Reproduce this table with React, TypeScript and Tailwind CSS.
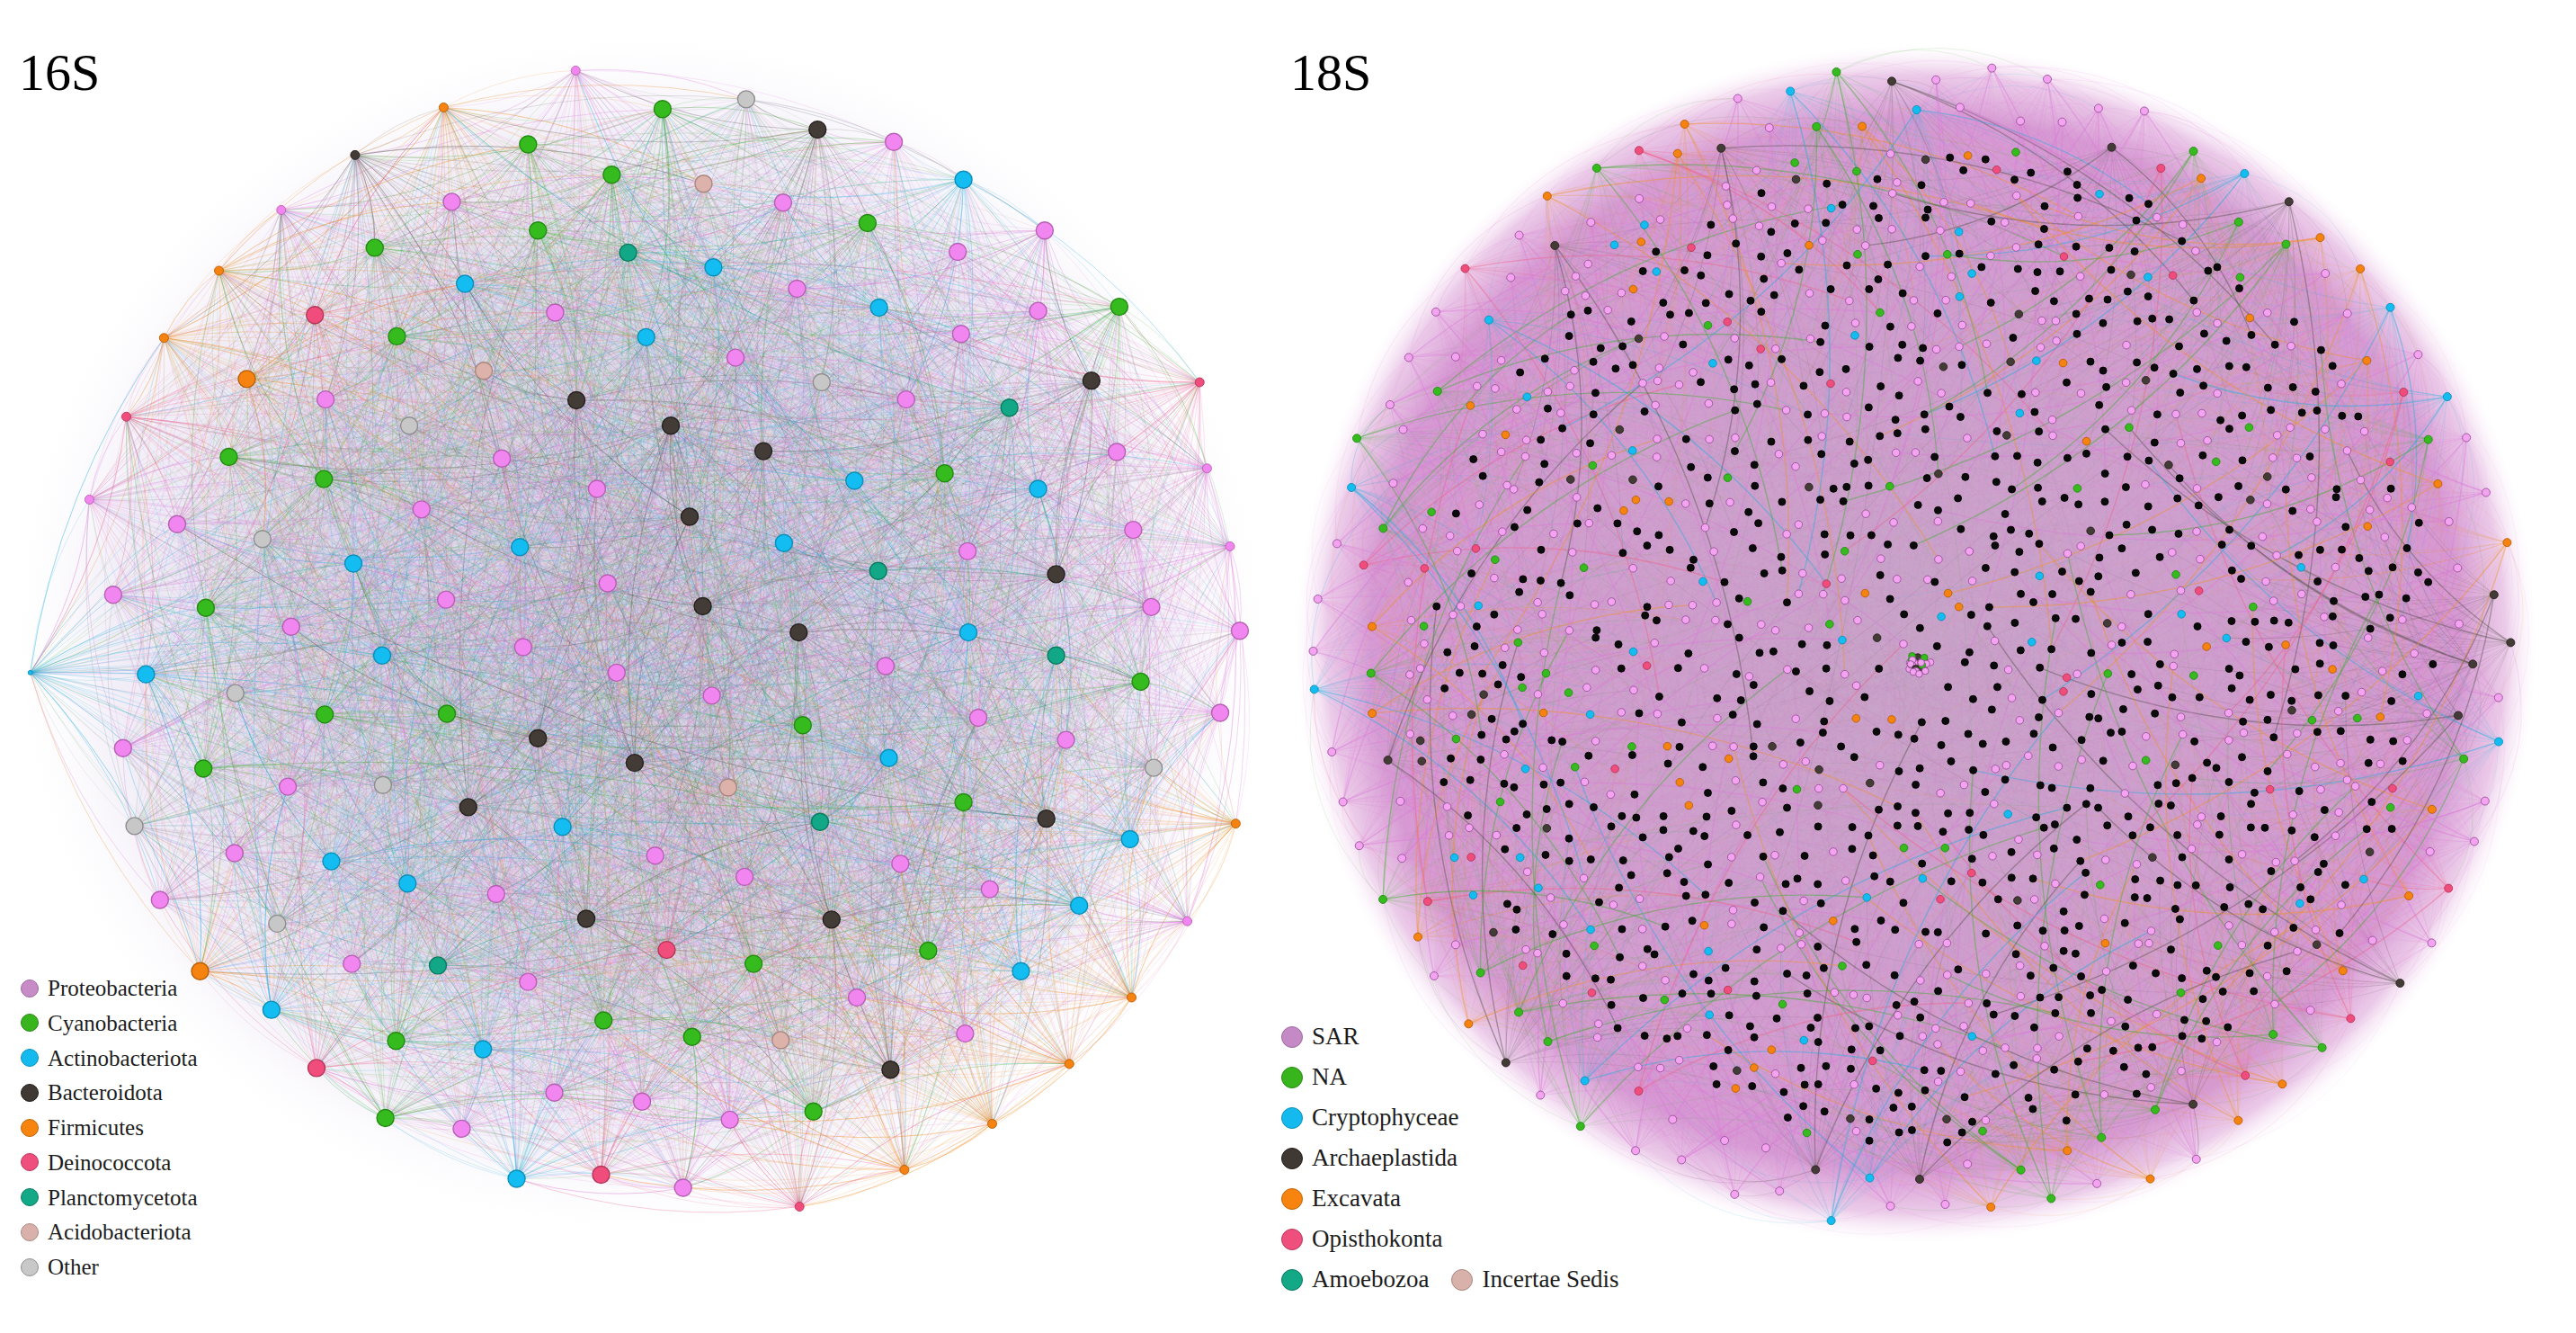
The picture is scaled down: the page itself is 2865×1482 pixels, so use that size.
import React from "react";

type GNode = { x: number; y: number; c: string; r: number };
type GEdge = { d: string; s: string; o: number; w: number };

function rng(seed: number) {
  let a = seed >>> 0;
  return () => {
    a = (a + 0x6d2b79f5) >>> 0;
    let t = a;
    t = Math.imul(t ^ (t >>> 15), t | 1);
    t ^= t + Math.imul(t ^ (t >>> 7), t | 61);
    return ((t ^ (t >>> 14)) >>> 0) / 4294967296;
  };
}

// gephi style clockwise bend
function curve(x1: number, y1: number, x2: number, y2: number, k: number) {
  const mx = (x1 + x2) / 2;
  const my = (y1 + y2) / 2;
  const dx = x2 - x1;
  const dy = y2 - y1;
  return `M${x1.toFixed(1)} ${y1.toFixed(1)}Q${(mx + dy * k).toFixed(1)} ${(my - dx * k).toFixed(1)} ${x2.toFixed(1)} ${y2.toFixed(1)}`;
}

// Q = SAR pink on the 18S plot (lighter than 16S proteobacteria)
const FILL: Record<string, string> = {
  P: "#f286f0",
  Q: "#f3a3ef",
  G: "#35bb1d",
  B: "#13bdf2",
  K: "#433b36",
  O: "#f6830f",
  R: "#f04d7c",
  T: "#12a786",
  A: "#dcb2ab",
  X: "#c7c7c7",
  N: "#0b0b0b",
};
const STROKE: Record<string, string> = {
  P: "#b660b4",
  Q: "#98509a",
  G: "#238a12",
  B: "#0b8fb8",
  K: "#25201d",
  O: "#b85e08",
  R: "#b3355a",
  T: "#0a7a60",
  A: "#a88680",
  X: "#8e8e8e",
  N: "#000000",
};
const EDGE: Record<string, string> = {
  P: "#dc7ada",
  Q: "#dc7ada",
  G: "#3cae2c",
  B: "#1eaee2",
  K: "#57524d",
  O: "#f0902a",
  R: "#f06088",
  T: "#18a888",
  A: "#d8a8a0",
  X: "#a8a8b4",
  N: "#c47fc2",
};

// node positions read off the 16S layout (sampled at 1.0965x)
const RAW16 = `702,86,Ps 541,131,Os 808,133,G 910,121,X 997,158,K 1090,173,P 644,176,G 433,189,Ks 746,213,G 858,224,A 955,247,P 1175,219,B 551,246,P 343,256,Ps 1058,272,G 656,281,G 1274,281,P 457,302,G 766,308,T 1168,307,P 267,330,Os 567,346,B 870,326,B 972,352,P 1072,375,B 1365,374,G 1266,379,P 384,384,R 677,381,P 484,410,G 788,411,B 200,412,Os 1172,407,P 897,436,P 590,452,A 301,462,O 1002,466,X 1331,464,K 1463,466,Rs 397,487,P 703,488,K 1105,487,P 1231,497,T 154,508,Rs 499,519,X 818,519,K 931,550,K 1362,551,P 279,557,G 612,559,P 1152,577,G 1472,571,Ps 395,584,G 728,596,P 1042,586,B 1266,596,B 109,609,Ps 514,621,P 841,630,K 216,639,P 1382,646,P 320,657,X 634,667,B 956,662,B 1180,672,P 1500,666,Ps 431,687,B 1071,696,T 1288,700,K 741,711,P 138,725,P 251,741,G 544,731,P 857,739,K 1404,740,P 355,764,P 974,771,K 1512,769,P 1181,771,B 638,789,P 466,799,B 1288,799,T 752,820,P 1080,812,P 178,822,B 1391,831,G 37,820,Bt 287,845,X 868,848,P 396,871,G 545,870,G 1488,869,P 979,884,G 1193,875,P 150,912,P 656,900,K 1300,902,P 774,930,K 248,937,G 1407,936,X 1084,924,B 351,959,P 467,957,X 888,960,A 571,984,K 1175,978,G 164,1007,X 1276,998,K 1000,1002,T 1507,1004,Os 686,1008,B 1378,1023,B 286,1040,P 799,1043,P 404,1050,B 1098,1053,P 497,1077,B 908,1069,P 1207,1084,P 195,1097,P 605,1090,P 1316,1104,B 715,1120,K 1014,1121,K 1448,1123,Ps 338,1126,X 813,1158,R 1132,1159,G 429,1175,P 534,1177,T 919,1175,G 244,1184,O 1245,1184,B 644,1197,P 1380,1216,Os 1045,1216,P 331,1231,B 736,1244,G 844,1264,G 952,1268,A 483,1269,G 589,1279,B 1177,1260,P 386,1302,R 1086,1304,K 1304,1297,Os 676,1332,P 783,1343,P 470,1363,G 890,1365,P 992,1355,G 1210,1370,Os 563,1376,P 1103,1426,Os 630,1437,B 733,1432,R 833,1448,P 975,1471,Rs`;

function build16() {
  const nodes: GNode[] = RAW16.trim()
    .split(/\s+/)
    .map((t) => {
      const [x, y, k] = t.split(",");
      const r = k[1] === "s" ? 5 : k[1] === "t" ? 2.5 : 9.5;
      return { x: +x / 1.0965, y: +y / 1.0965, c: k[0], r };
    });
  const rand = rng(16);
  const edges: GEdge[] = [];
  nodes.forEach((a) => {
    const k = a.r < 6 ? 52 : 40;
    for (let j = 0; j < k; j++) {
      let b = nodes[Math.floor(rand() * nodes.length)];
      if (rand() < 0.5) {
        for (let t = 0; t < 14; t++) {
          const cand = nodes[Math.floor(rand() * nodes.length)];
          if (Math.hypot(cand.x - a.x, cand.y - a.y) < 430) {
            b = cand;
            break;
          }
        }
      }
      if (b === a) continue;
      edges.push({ d: curve(a.x, a.y, b.x, b.y, 0.12), s: EDGE[a.c], o: 0.19, w: 0.9 });
    }
  });
  return { nodes, edges };
}

function build18() {
  const rand = rng(18);
  const cx = 716;
  const cy = 716;
  const rx = 672;
  const ry = 648;
  const ring: GNode[] = [];
  const RC = "QQQQQQQQQQQQKKKBBBGGGOOORR";
  const NR = 140;
  for (let i = 0; i < NR; i++) {
    const a = (i / NR) * Math.PI * 2 + (rand() - 0.5) * 0.025;
    const rr = i % 2 === 0 ? 0.96 + rand() * 0.04 : 0.89 + rand() * 0.04;
    const c = RC[Math.floor(rand() * RC.length)];
    ring.push({ x: cx + Math.cos(a) * rx * rr, y: cy + Math.sin(a) * ry * rr, c, r: 4.5 });
  }
  const inner: GNode[] = [];
  const step = 26;
  for (let y = cy - ry; y < cy + ry; y += step) {
    for (let x = cx - rx; x < cx + rx; x += step) {
      const px = x + (rand() - 0.5) * 19;
      const py = y + (rand() - 0.5) * 19;
      const dO = Math.hypot((px - cx) / rx, (py - cy) / ry);
      if (dO > 0.86) continue;
      if (Math.hypot(px - 720, py - 739) < 26) continue;
      const dB = Math.hypot((px - 770) / 600, (py - 728) / 555);
      const u = rand();
      let c = "";
      if (dB < 1)
        c = u < 0.55 ? "N" : u < 0.79 ? "Q" : u < 0.82 ? "G" : u < 0.85 ? "B" : u < 0.87 ? "O" : u < 0.885 ? "R" : u < 0.91 ? "K" : "";
      else c = u < 0.38 ? "Q" : u < 0.43 ? "G" : u < 0.48 ? "B" : u < 0.51 ? "O" : u < 0.54 ? "K" : u < 0.56 ? "R" : "";
      if (!c) continue;
      inner.push({ x: px, y: py, c, r: c === "N" ? 4 : 4.3 });
    }
  }
  const cluster: GNode[] = [];
  const CC = "QQQQQQQQGGBKKKOQ";
  for (let i = 0; i < 26; i++) {
    const a = rand() * Math.PI * 2;
    const d = Math.sqrt(rand()) * 13;
    cluster.push({ x: 720 + Math.cos(a) * d, y: 739 + Math.sin(a) * d, c: CC[Math.floor(rand() * CC.length)], r: 3.8 });
  }
  const all = [...inner, ...ring];
  const edges: GEdge[] = [];
  // halo arcs between rim nodes, bulging outward
  for (let i = 0; i < 380; i++) {
    const ai = Math.floor(rand() * NR);
    const a = ring[ai];
    const b = ring[(ai + 1 + Math.floor(rand() * 10)) % NR];
    const mx = (a.x + b.x) / 2;
    const my = (a.y + b.y) / 2;
    const len = Math.hypot(b.x - a.x, b.y - a.y);
    const ox = mx - cx;
    const oy = my - cy;
    const ol = Math.hypot(ox, oy) || 1;
    const qx = mx + (ox / ol) * len * 0.26;
    const qy = my + (oy / ol) * len * 0.26;
    const col = rand() < 0.65 ? "#e3a3df" : EDGE[a.c];
    edges.push({ d: `M${a.x.toFixed(1)} ${a.y.toFixed(1)}Q${qx.toFixed(1)} ${qy.toFixed(1)} ${b.x.toFixed(1)} ${b.y.toFixed(1)}`, s: col, o: 0.12, w: 1 });
  }
  // texture chords
  for (let i = 0; i < 2600; i++) {
    const a = all[Math.floor(rand() * all.length)];
    const b = all[Math.floor(rand() * all.length)];
    if (a === b) continue;
    const u = rand();
    const col = u < 0.6 ? "#c97fc6" : u < 0.8 ? "#9aa3c8" : EDGE[a.c];
    edges.push({ d: curve(a.x, a.y, b.x, b.y, 0.15), s: col, o: 0.07, w: 0.9 });
  }
  // rim fans
  ring.forEach((a) => {
    for (let j = 0; j < 22; j++) {
      let b = inner[Math.floor(rand() * inner.length)];
      for (let t = 0; t < 20; t++) {
        const cand = inner[Math.floor(rand() * inner.length)];
        if (Math.hypot(cand.x - a.x, cand.y - a.y) < 380) {
          b = cand;
          break;
        }
      }
      edges.push({ d: curve(a.x, a.y, b.x, b.y, 0.1), s: EDGE[a.c], o: 0.16, w: 0.8 });
    }
  });
  ring.forEach((a) => {
    for (let j = 0; j < 2; j++) {
      let b = inner[Math.floor(rand() * inner.length)];
      for (let t = 0; t < 30; t++) {
        const cand = inner[Math.floor(rand() * inner.length)];
        const d = Math.hypot(cand.x - a.x, cand.y - a.y);
        if (d > 250 && d < 620) {
          b = cand;
          break;
        }
      }
      edges.push({ d: curve(a.x, a.y, b.x, b.y, 0.14), s: EDGE[a.c], o: 0.45, w: 1.4 });
    }
  });
  return { nodes: [...ring, ...inner, ...cluster], edges };
}

const G16 = build16();
const G18 = build18();

function Graph({ w, h, data, bg }: { w: number; h: number; data: { nodes: GNode[]; edges: GEdge[] }; bg?: React.ReactNode }) {
  return (
    <svg className="absolute inset-0" width={w} height={h} viewBox={`0 0 ${w} ${h}`}>
      {bg}
      <g fill="none" strokeLinecap="round">
        {data.edges.map((e, i) => (
          <path key={i} d={e.d} stroke={e.s} strokeOpacity={e.o} strokeWidth={e.w} />
        ))}
      </g>
      <g>
        {data.nodes.map((n, i) => (
          <circle
            key={i}
            cx={n.x}
            cy={n.y}
            r={n.r}
            fill={FILL[n.c]}
            stroke={STROKE[n.c]}
            strokeWidth={n.r > 6 ? 1.4 : 0.9}
          />
        ))}
      </g>
    </svg>
  );
}

const legend16 = [
  { label: "Proteobacteria", cls: "bg-[#c78bc8] border-[#a06aa0]" },
  { label: "Cyanobacteria", cls: "bg-[#38b41c] border-[#268a12]" },
  { label: "Actinobacteriota", cls: "bg-[#14b9ee] border-[#0d90ba]" },
  { label: "Bacteroidota", cls: "bg-[#3f3833] border-[#221e1b]" },
  { label: "Firmicutes", cls: "bg-[#f6840f] border-[#c0650a]" },
  { label: "Deinococcota", cls: "bg-[#ef4f7c] border-[#b8395c]" },
  { label: "Planctomycetota", cls: "bg-[#13a886] border-[#0b7c62]" },
  { label: "Acidobacteriota", cls: "bg-[#d9b1ab] border-[#ab8882]" },
  { label: "Other", cls: "bg-[#c8c8c8] border-[#8f8f8f]" },
];

const legend18 = [
  { label: "SAR", cls: "bg-[#c58ac6] border-[#a06aa0]" },
  { label: "NA", cls: "bg-[#38b41c] border-[#268a12]" },
  { label: "Cryptophyceae", cls: "bg-[#14b9ee] border-[#0d90ba]" },
  { label: "Archaeplastida", cls: "bg-[#3f3833] border-[#221e1b]" },
  { label: "Excavata", cls: "bg-[#f6840f] border-[#c0650a]" },
  { label: "Opisthokonta", cls: "bg-[#ef4f7c] border-[#b8395c]" },
];

export default function App() {
  return (
    <div className="w-[2865px] h-[1482px] bg-white flex overflow-hidden font-['Liberation_Serif','Times_New_Roman',serif] text-[#1c1c1c]">
      {/* 16S panel */}
      <div className="relative w-[1415px] h-full flex flex-col justify-between">
        <Graph
          w={1415}
          h={1482}
          data={G16}
          bg={
            <>
              <defs>
                <radialGradient id="g16" cx="50%" cy="50%" r="50%">
                  <stop offset="0" stopColor="#b3b0d2" stopOpacity="0.55" />
                  <stop offset="0.6" stopColor="#b9b3d6" stopOpacity="0.45" />
                  <stop offset="0.85" stopColor="#c9bde0" stopOpacity="0.25" />
                  <stop offset="1" stopColor="#e8def0" stopOpacity="0" />
                </radialGradient>
              </defs>
              <ellipse cx={712} cy={705} rx={690} ry={660} fill="url(#g16)" />
            </>
          }
        />
        <div className="relative pl-[21px] pt-[52px] text-[58px] leading-none text-black">16S</div>
        <div className="relative flex flex-col pl-[23px] pb-[54px]">
          {legend16.map((it) => (
            <div key={it.label} className="flex items-center h-[38.75px] gap-[10px] text-[25px] leading-none">
              <span className={`w-[20px] h-[20px] rounded-full border-[1.5px] ${it.cls}`} />
              <span>{it.label}</span>
            </div>
          ))}
        </div>
      </div>

      {/* 18S panel */}
      <div className="relative flex-1 h-full flex flex-col justify-between">
        <Graph
          w={1450}
          h={1482}
          data={G18}
          bg={
            <>
              <defs>
                <radialGradient id="g18" cx="50%" cy="50%" r="50%">
                  <stop offset="0" stopColor="#c8a6c8" />
                  <stop offset="0.35" stopColor="#cda2cc" />
                  <stop offset="0.7" stopColor="#d29ed0" />
                  <stop offset="0.88" stopColor="#d69bd3" />
                  <stop offset="0.95" stopColor="#e6bde3" stopOpacity="0.8" />
                  <stop offset="1" stopColor="#fbeefa" stopOpacity="0" />
                </radialGradient>
              </defs>
              <ellipse cx={716} cy={716} rx={690} ry={666} fill="url(#g18)" />
            </>
          }
        />
        <div className="relative pl-[20px] pt-[52px] text-[58px] leading-none text-black">18S</div>
        <div className="relative flex flex-col pl-[10px] pb-[37px]">
          {legend18.map((it) => (
            <div key={it.label} className="flex items-center h-[45px] gap-[10px] text-[27px] leading-none">
              <span className={`w-[24px] h-[24px] rounded-full border-[1.5px] ${it.cls}`} />
              <span>{it.label}</span>
            </div>
          ))}
          <div className="flex items-center h-[45px] text-[27px] leading-none">
            <span className="w-[24px] h-[24px] rounded-full border-[1.5px] bg-[#13a886] border-[#0b7c62]" />
            <span className="ml-[10px]">Amoebozoa</span>
            <span className="ml-[25px] w-[24px] h-[24px] rounded-full border-[1.5px] bg-[#d9b1ab] border-[#ab8882]" />
            <span className="ml-[10px]">Incertae Sedis</span>
          </div>
        </div>
      </div>
    </div>
  );
}
